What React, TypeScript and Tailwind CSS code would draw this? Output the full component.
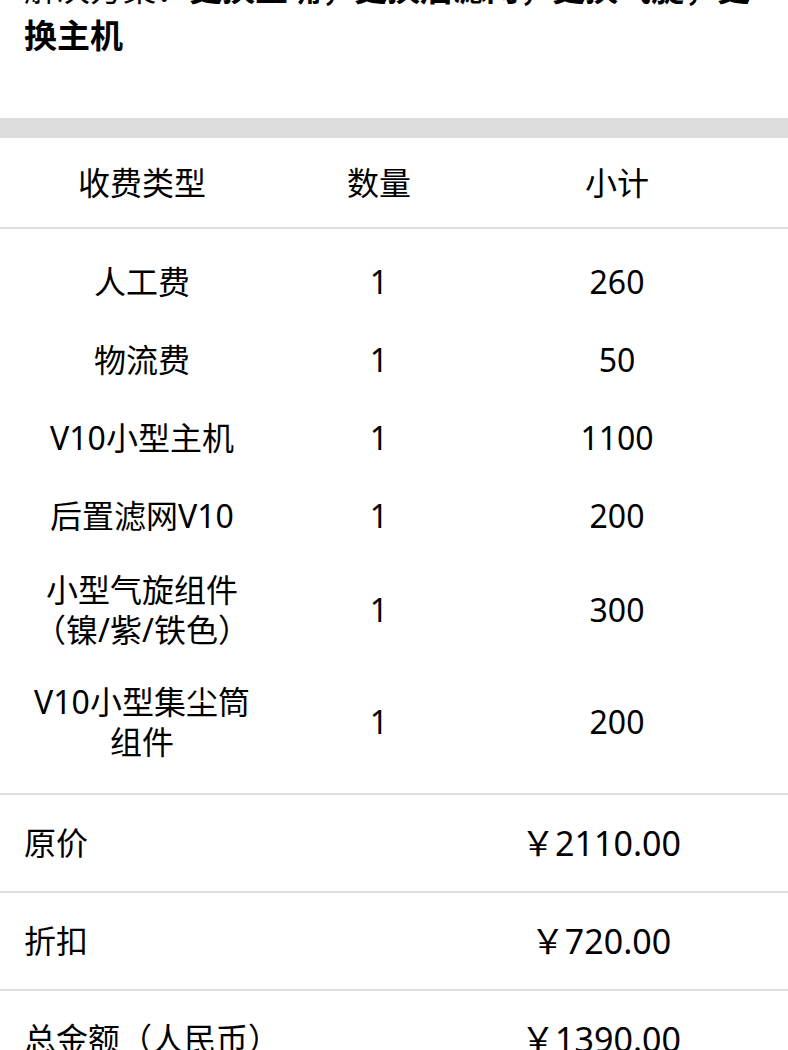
const font = "font-['Noto_Sans','Noto_Sans_CJK_SC',sans-serif]";

const items = [
  { name: ["人工费"], qty: "1", sub: "260", pad: "py-[19px]" },
  { name: ["物流费"], qty: "1", sub: "50", pad: "py-[19px]" },
  { name: ["V10小型主机"], qty: "1", sub: "1100", pad: "py-[19px]" },
  { name: ["后置滤网V10"], qty: "1", sub: "200", pad: "py-[19px]" },
  { name: ["小型气旋组件", "（镍/紫/铁色）"], qty: "1", sub: "300", pad: "py-[15px]" },
  { name: ["V10小型集尘筒", "组件"], qty: "1", sub: "200", pad: "py-[17px]" },
];

const totals = [
  { label: "原价", value: "￥2110.00" },
  { label: "折扣", value: "￥720.00" },
  { label: "总金额（人民币）", value: "￥1390.00" },
];

export default function App() {
  return (
    <div className={`${font} w-[788px] h-[1050px] overflow-hidden bg-white text-black`}>
      {/* solution text, first line scrolled off the top */}
      <p className="-mt-[35px] px-6 text-[33px] leading-[47px] h-[153px]">
        解决方案：<span className="font-bold">更换主嘴，更换后滤网，更换气旋，更换主机</span>
      </p>

      <div className="h-5 bg-[#dcdcdc]" />

      {/* table header */}
      <div className="grid grid-cols-[284px_190px_286px] h-[89px] items-center text-[32px] text-center">
        <div>收费类型</div>
        <div>数量</div>
        <div>小计</div>
      </div>
      <div className="h-[2px] bg-[#e0e0e0]" />

      <div className="pt-[14px] pb-[14px]">
        {items.map((it, i) => (
          <div
            key={i}
            className={`grid grid-cols-[284px_190px_286px] items-center text-[32px] leading-[40px] text-center ${it.pad}`}
          >
            <div>
              {it.name.map((n, j) => (
                <div key={j}>{n}</div>
              ))}
            </div>
            <div>{it.qty}</div>
            <div>{it.sub}</div>
          </div>
        ))}
      </div>

      {totals.map((t, i) => (
        <div key={i}>
          <div className="h-[2px] bg-[#e0e0e0]" />
          <div className="flex items-center h-[96px] text-[32px]">
            <div className="flex-1 pl-6">{t.label}</div>
            <div className="w-[254px] mr-[60px] text-center text-[34px]">{t.value}</div>
          </div>
        </div>
      ))}
    </div>
  );
}
